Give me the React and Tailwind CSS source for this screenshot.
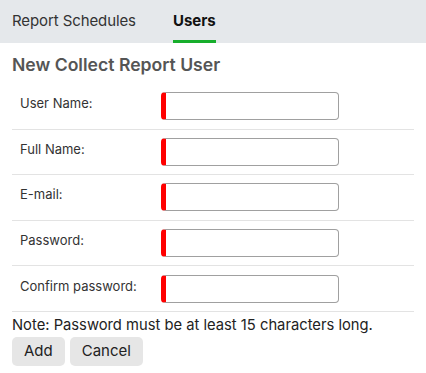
export default function App() {
  const fields = ["User Name:", "Full Name:", "E-mail:", "Password:", "Confirm password:"];
  return (
    <div className="w-[426px] h-[373px] bg-white text-[#222] overflow-hidden" style={{ fontFamily: "Inter, 'Noto Sans', sans-serif" }}>
      <div className="h-[43px] bg-[#e5e8eb] flex items-stretch pl-3 gap-[37px]">
        <div className="flex items-center text-[15px] text-[#333] tracking-[-0.1px]">Report Schedules</div>
        <div className="relative flex items-center text-[15px] font-bold text-[#111]">
          Users
          <div className="absolute left-0 right-0 bottom-0 h-[3px] bg-[#17ae2c]"></div>
        </div>
      </div>
      <div className="px-3">
        <div className="pt-[10px] pb-[7px] text-[17.6px] font-semibold text-[#555] leading-[24px]">New Collect Report User</div>
        <div>
          {fields.map((f) => (
            <div key={f} className="flex items-start border-b border-[#e3e3e3] py-[8.3px] pl-2">
              <div className="w-[141px] pt-[2px] text-[13px] leading-[18px] text-[#333]">{f}</div>
              <div className="w-[178px] h-[28px] rounded-[4px] border border-[#a0a0a0] border-l-[5px] border-l-[#f00] bg-white"></div>
            </div>
          ))}
        </div>
        <div className="pt-[3px] text-[14.75px] leading-[20px] text-[#222]">Note: Password must be at least 15 characters long.</div>
        <div className="flex gap-[5px] pt-[2px]">
          <button className="h-[29px] px-[12px] rounded-[5px] bg-[#e6e6e6] text-[15px] text-[#222]">Add</button>
          <button className="h-[29px] px-[12px] rounded-[5px] bg-[#e6e6e6] text-[15px] text-[#222]">Cancel</button>
        </div>
      </div>
    </div>
  );
}
